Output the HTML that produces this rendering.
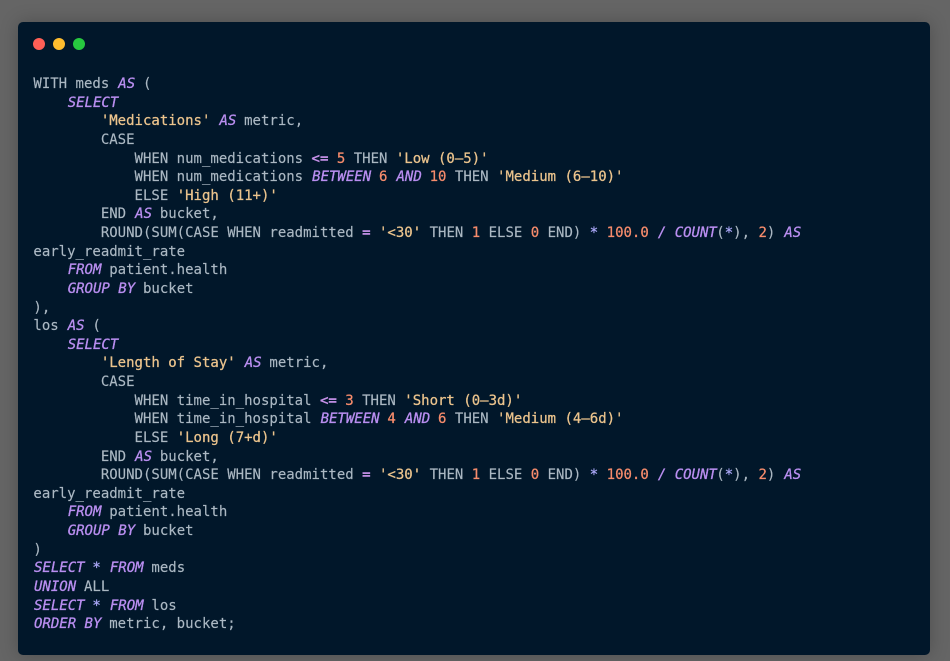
<!DOCTYPE html>
<html>
<head>
<meta charset="utf-8">
<style>
html,body{margin:0;padding:0;width:950px;height:661px;overflow:hidden;background:#656565;}
#card{position:absolute;left:18px;top:22px;width:912px;height:633px;background:#01172a;border-radius:5px;box-shadow:0 0 18px rgba(0,0,0,.22);}
.d{position:absolute;top:37.75px;width:12.5px;height:12.5px;border-radius:50%;}
pre{position:absolute;left:33.4px;top:75px;margin:0;font-family:"DejaVu Sans Mono",monospace;font-size:14px;line-height:18.62px;color:#abb8c3;white-space:pre;-webkit-text-stroke:.15px #abb8c3;}
i{color:#b98ef0;font-style:italic;-webkit-text-stroke:.3px #b98ef0;position:relative;left:.6px;}
s{color:#ecc48d;text-decoration:none;-webkit-text-stroke:.25px #ecc48d;}
b{color:#f78c6c;font-weight:normal;-webkit-text-stroke:.25px #f78c6c;}
u{color:#c792ea;text-decoration:none;-webkit-text-stroke:.4px #c792ea;}
em{color:#a9a6f5;font-style:normal;-webkit-text-stroke:.3px #a9a6f5;}
</style>
</head>
<body>
<div id="card"></div>
<div class="d" style="left:32.75px;background:#ff5f56"></div>
<div class="d" style="left:52.75px;background:#ffbd2e"></div>
<div class="d" style="left:72.75px;background:#27c93f"></div>
<pre>WITH meds <i>AS</i> (
    <i>SELECT</i>
        <s>'Medications'</s> <i>AS</i> metric,
        CASE
            WHEN num_medications <u>&lt;=</u> <b>5</b> THEN <s>'Low (0–5)'</s>
            WHEN num_medications <i>BETWEEN</i> <b>6</b> <i>AND</i> <b>10</b> THEN <s>'Medium (6–10)'</s>
            ELSE <s>'High (11+)'</s>
        END <i>AS</i> bucket,
        ROUND(SUM(CASE WHEN readmitted <u>=</u> <s>'&lt;30'</s> THEN <b>1</b> ELSE <b>0</b> END) <em>*</em> <b>100.0</b> <i>/</i> <i>COUNT</i>(<em>*</em>), <b>2</b>) <i>AS</i>
early_readmit_rate
    <i>FROM</i> patient.health
    <i>GROUP BY</i> bucket
),
los <i>AS</i> (
    <i>SELECT</i>
        <s>'Length of Stay'</s> <i>AS</i> metric,
        CASE
            WHEN time_in_hospital <u>&lt;=</u> <b>3</b> THEN <s>'Short (0–3d)'</s>
            WHEN time_in_hospital <i>BETWEEN</i> <b>4</b> <i>AND</i> <b>6</b> THEN <s>'Medium (4–6d)'</s>
            ELSE <s>'Long (7+d)'</s>
        END <i>AS</i> bucket,
        ROUND(SUM(CASE WHEN readmitted <u>=</u> <s>'&lt;30'</s> THEN <b>1</b> ELSE <b>0</b> END) <em>*</em> <b>100.0</b> <i>/</i> <i>COUNT</i>(<em>*</em>), <b>2</b>) <i>AS</i>
early_readmit_rate
    <i>FROM</i> patient.health
    <i>GROUP BY</i> bucket
)
<i>SELECT</i> <em>*</em> <i>FROM</i> meds
<i>UNION</i> ALL
<i>SELECT</i> <em>*</em> <i>FROM</i> los
<i>ORDER BY</i> metric, bucket;</pre>
</body>
</html>
